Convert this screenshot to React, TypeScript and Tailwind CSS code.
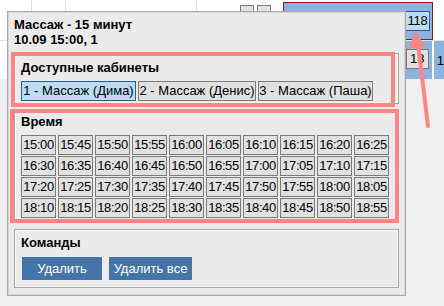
const font = "font-['Liberation_Sans',Arial,sans-serif]";

const times = [
  "15:00", "15:45", "15:50", "15:55", "16:00", "16:05", "16:10", "16:15", "16:20", "16:25",
  "16:30", "16:35", "16:40", "16:45", "16:50", "16:55", "17:00", "17:05", "17:10", "17:15",
  "17:20", "17:25", "17:30", "17:35", "17:40", "17:45", "17:50", "17:55", "18:00", "18:05",
  "18:10", "18:15", "18:20", "18:25", "18:30", "18:35", "18:40", "18:45", "18:50", "18:55",
];

const rooms = [
  { label: "1 - Массаж (Дима)", w: "w-[115px]", active: true },
  { label: "2 - Массаж (Денис)", w: "w-[118px]", active: false },
  { label: "3 - Массаж (Паша)", w: "w-[115px]", active: false },
];

function Group({ children, className = "" }: { children: React.ReactNode; className?: string }) {
  return (
    <div
      className={`relative ml-[6px] w-[385px] border border-[#a8a8a8] shadow-[inset_0_0_0_1px_#f6f6f6] pl-[6px] ${className}`}
    >
      {children}
    </div>
  );
}

function Background() {
  return (
    <div className="flex flex-col">
      <div className="flex h-[41px] bg-white border-b border-[#e2e2e2]">
        <div className="w-[32px] border-r border-[#e2e2e2]" />
        <div className="w-[34px] border-r border-[#e2e2e2]" />
        <div className="w-[131px] border-r border-[#e2e2e2]" />
        <div className="w-[86px] flex gap-[3px] pl-[43px] pt-[5px]">
          <div className="w-[14px] h-[14px] bg-[#e1e1e1] border border-[#7a7a7a]" />
          <div className="w-[14px] h-[14px] bg-[#e1e1e1] border border-[#7a7a7a]" />
        </div>
        <div className="mt-[2px] w-[150px] h-[38px] bg-[#8db3df] border border-[#8b1a1a] flex justify-end pt-[8px] pr-[2px]">
          <div className="w-[25px] h-[20px] bg-[#bcdcf2] border border-[#2f5d8c] text-[13px] leading-[18px] text-center text-black tracking-[-0.3px]">
            118
          </div>
        </div>
        <div className="flex-1" />
      </div>
      <div className="flex h-[38px] bg-white">
        <div className="w-[405px]" />
        <div className="w-[28px] bg-[#8db3df] flex pl-[2px] pt-[8px]">
          <div className="w-[23px] h-[20px] bg-[#e1e1e1] border border-[#7a7a7a] text-[13px] leading-[18px] text-center text-black">
            18
          </div>
        </div>
        <div className="w-[2px]" />
        <div className="flex-1 bg-[#8db3df] text-[13px] pl-[3px] pt-[10px] text-black">1</div>
      </div>
    </div>
  );
}

export default function App() {
  return (
    <div className={`relative w-[444px] h-[306px] overflow-hidden bg-[#f0f0f0] text-black ${font}`}>
      <Background />

      {/* popup */}
      <div className="absolute left-[7px] top-[11px] w-[399px] h-[285px] bg-[#ebebeb] border border-[#a9a9a9] shadow-[inset_0_0_0_1px_#d6d6d6] pt-[5px]">
        <div className="pl-[6px] text-[13px] leading-[15px] font-bold">
          <div>Массаж - 15 минут</div>
          <div>10.09 15:00, 1</div>
        </div>

        <Group className="mt-[6px] h-[51px] pt-[6px]">
          <div className="text-[13px] leading-[15px] font-bold">Доступные кабинеты</div>
          <div className="mt-[6px] flex gap-[2px]">
            {rooms.map((r) => (
              <div
                key={r.label}
                className={`${r.w} h-[20px] border text-[13px] leading-[18px] text-center whitespace-nowrap ${
                  r.active ? "bg-[#bcdcf2] border-[#2f5d8c]" : "bg-[#e1e1e1] border-[#7a7a7a]"
                }`}
              >
                {r.label}
              </div>
            ))}
          </div>
          <div className="absolute left-[-4px] top-[-2px] w-[384px] h-[55px] border-[4px] border-[#ff8585] pointer-events-none" />
        </Group>

        <Group className="mt-[6px] h-[112px] pt-[3px]">
          <div className="text-[13px] leading-[15px] font-bold">Время</div>
          <div className="mt-[6px] grid grid-cols-[repeat(10,35px)] gap-x-[2px] gap-y-[1px]">
            {times.map((t) => (
              <div
                key={t}
                className="h-[20px] bg-[#e1e1e1] border border-[#7a7a7a] text-[13px] leading-[18px] text-center tracking-[-0.4px]"
              >
                {t}
              </div>
            ))}
          </div>
          <div className="absolute left-[-5px] top-[-2px] w-[389px] h-[114px] border-[4px] border-[#ff8585] pointer-events-none" />
        </Group>

        <Group className="mt-[7px] h-[59px] pt-[5px]">
          <div className="text-[13px] leading-[15px] font-bold">Команды</div>
          <div className="mt-[7px] flex gap-[7px] pl-[1px]">
            <div className="w-[80px] h-[23px] bg-[#4674a9] text-white text-[13px] leading-[23px] text-center">
              Удалить
            </div>
            <div className="w-[83px] h-[23px] bg-[#4674a9] text-white text-[13px] leading-[23px] text-center">
              Удалить все
            </div>
          </div>
        </Group>
      </div>

      {/* annotation arrow */}
      <svg className="absolute left-0 top-0 pointer-events-none" width="444" height="306">
        <line x1="428" y1="126" x2="418" y2="44" stroke="#ff8585" strokeWidth="4" strokeLinecap="round" />
        <polygon points="416,31 408,49 425,47" fill="#ff8585" />
      </svg>
    </div>
  );
}
